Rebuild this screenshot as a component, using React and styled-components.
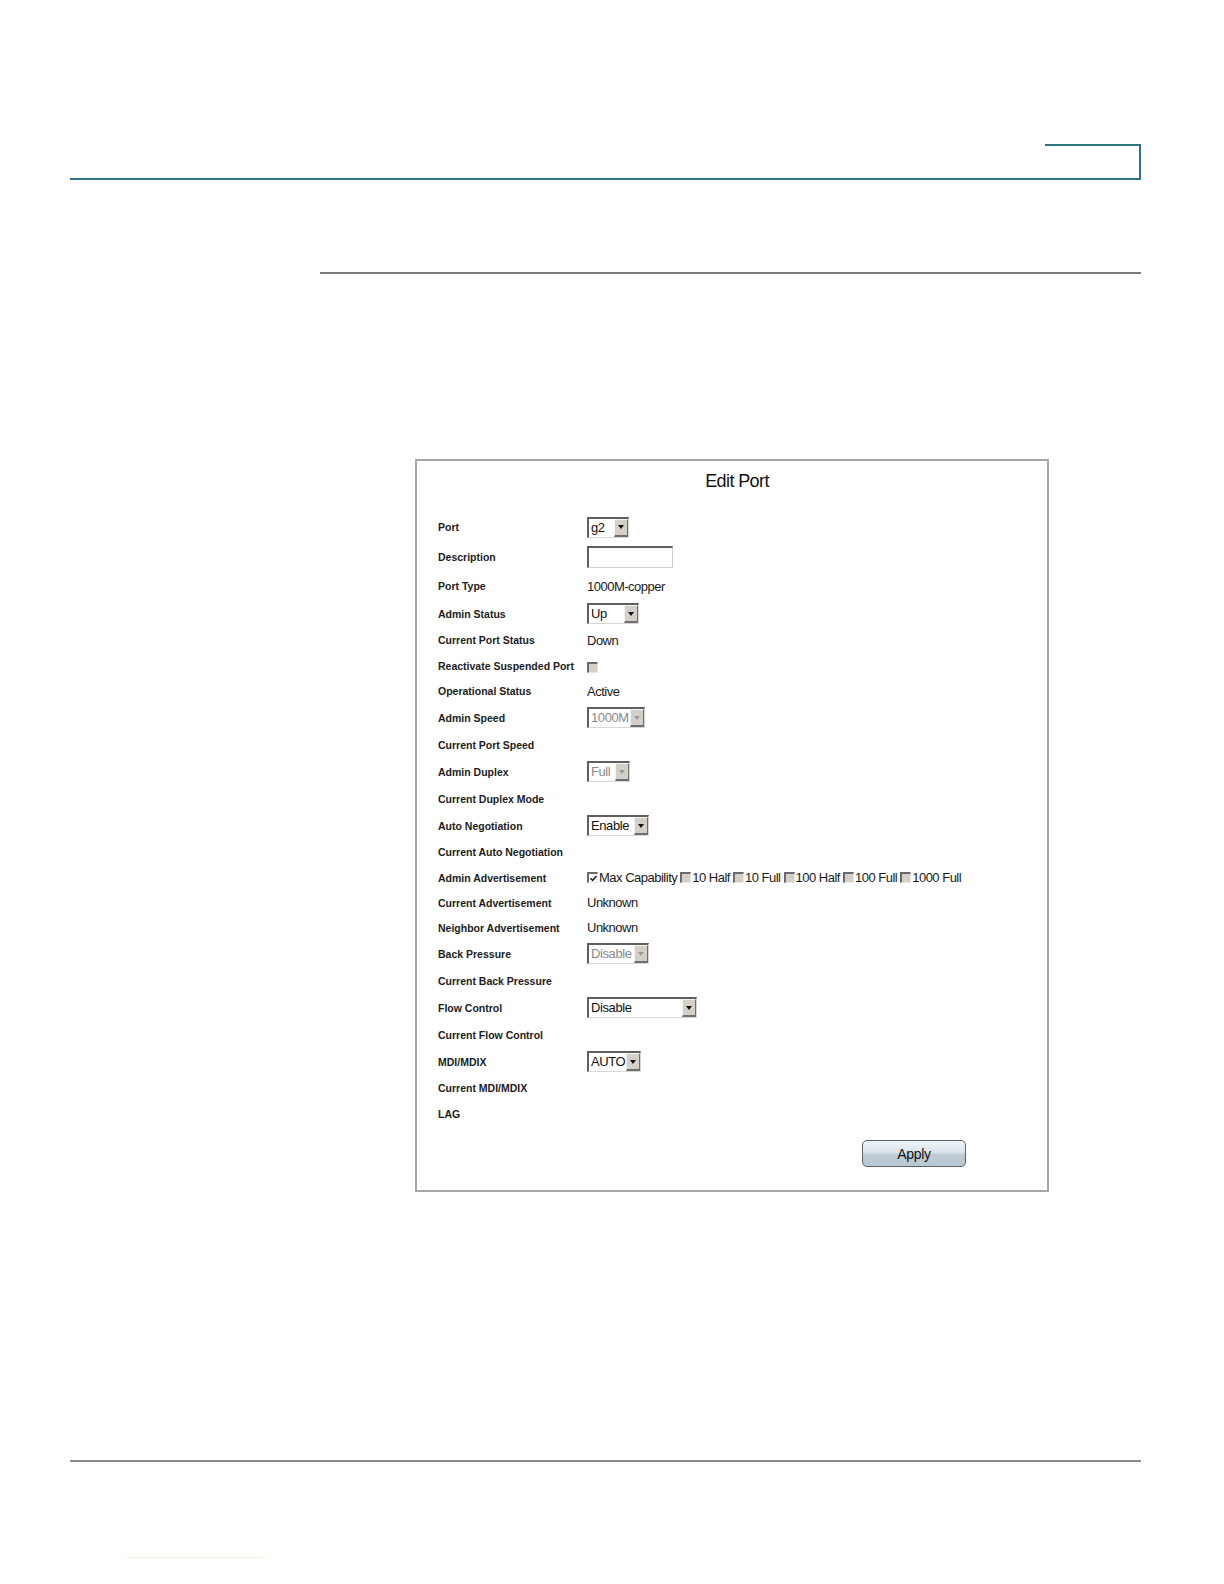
import React from 'react';
import styled, { createGlobalStyle } from 'styled-components';

const GlobalStyle = createGlobalStyle`
  html, body {
    margin: 0;
    padding: 0;
    background: #fff;
  }
  body {
    font-family: "Liberation Sans", Arial, sans-serif;
    color: #111;
  }
`;

const Page = styled.div`
  display: flex;
  flex-direction: column;
`;

const Header = styled.div`
  margin: 144px 83px 0 70px;
  display: flex;
  justify-content: flex-end;
  border-bottom: 2px solid #2f7280;
`;

const HeaderTab = styled.div`
  width: 94px;
  height: 32px;
  border-top: 2px solid #2f7280;
  border-right: 2px solid #2f7280;
`;

const SectionRule = styled.div`
  margin: 92px 83px 0 320px;
  border-top: 2px solid #7a7a7a;
`;

const Panel = styled.div`
  box-sizing: border-box;
  margin: 185px 0 0 415px;
  width: 634px;
  border: 2px solid #a6a6a6;
  padding: 0 0 23px 21px;
  display: flex;
  flex-direction: column;
`;

const Title = styled.div`
  font-size: 18px;
  letter-spacing: -0.6px;
  text-align: center;
  padding: 10px 11px 0 0;
  height: 51px;
  box-sizing: border-box;
  color: #111;
`;

const Row = styled.div`
  display: flex;
  align-items: center;
  height: ${p => p.h}px;
`;

const Label = styled.div`
  width: 149px;
  flex-shrink: 0;
  font-size: 10.5px;
  font-weight: bold;
  color: #1c1c1c;
  white-space: nowrap;
`;

const Value = styled.div`
  font-size: 13px;
  letter-spacing: -0.5px;
  color: #1a1a1a;
  white-space: nowrap;
`;

const SelectBox = styled.div`
  box-sizing: border-box;
  width: ${p => p.w}px;
  height: 21px;
  display: flex;
  align-items: stretch;
  border-top: 2px solid #5f5f5f;
  border-left: 2px solid #5f5f5f;
  border-bottom: 1px solid #d8d8d8;
  border-right: 1px solid #d8d8d8;
  background: #fff;
`;

const SelectText = styled.div`
  flex: 1;
  font-size: 13px;
  letter-spacing: -0.4px;
  line-height: 18px;
  padding-left: 2px;
  color: ${p => (p.disabled ? '#8a8a8a' : '#111')};
  overflow: hidden;
  white-space: nowrap;
`;

const ArrowButton = styled.div`
  width: 14px;
  flex-shrink: 0;
  box-sizing: border-box;
  background: #d4d0c8;
  border-top: 1px solid #f4f4f4;
  border-left: 1px solid #f4f4f4;
  border-bottom: 2px solid #6e6e6e;
  border-right: 1px solid #6e6e6e;
  display: flex;
  align-items: center;
  justify-content: center;
`;

const Triangle = styled.div`
  width: 0;
  height: 0;
  border-left: 3.5px solid transparent;
  border-right: 3.5px solid transparent;
  border-top: 4px solid ${p => (p.disabled ? '#9a9a9a' : '#111')};
`;

const TextInput = styled.div`
  box-sizing: border-box;
  width: 86px;
  height: 22px;
  border-top: 2px solid #5f5f5f;
  border-left: 2px solid #5f5f5f;
  border-bottom: 1px solid #d0d0d0;
  border-right: 1px solid #d0d0d0;
  background: #fff;
`;

const Check = styled.div`
  box-sizing: border-box;
  width: 11px;
  height: 11px;
  flex-shrink: 0;
  border-top: 2px solid #6a6a6a;
  border-left: 2px solid #6a6a6a;
  border-bottom: 1px solid #e8e8e8;
  border-right: 1px solid #e8e8e8;
  background: ${p => (p.checked ? '#fff' : '#d4d0c8')};
  display: flex;
  align-items: center;
  justify-content: center;
  margin-top: ${p => p.offset || 0}px;
`;

const AdGroup = styled.div`
  display: flex;
  align-items: center;
  gap: 3px;
`;

const AdItem = styled.div`
  display: flex;
  align-items: center;
  gap: 1px;
`;

const ApplyRow = styled.div`
  display: flex;
  justify-content: flex-end;
  padding: 14px 81px 0 0;
`;

const ApplyButton = styled.button`
  box-sizing: border-box;
  width: 104px;
  height: 27px;
  border: 1px solid #5b6166;
  border-radius: 5px;
  background: linear-gradient(to bottom, #eef3f6 0%, #dbe4ea 45%, #bccbd6 55%, #b8c8d3 100%);
  font-family: "Liberation Sans", Arial, sans-serif;
  font-size: 14px;
  letter-spacing: -0.3px;
  color: #111;
  padding: 0;
  cursor: pointer;
`;

const FooterRule = styled.div`
  margin: 268px 83px 0 70px;
  border-top: 2px solid #8a8a8a;
`;

const FaintRule = styled.div`
  margin: 95px 0 0 126px;
  width: 140px;
  border-top: 1px solid #f6f2dc;
`;

const Select = ({ w, value, disabled }) => (
  <SelectBox w={w}>
    <SelectText disabled={disabled}>{value}</SelectText>
    <ArrowButton>
      <Triangle disabled={disabled} />
    </ArrowButton>
  </SelectBox>
);

const CheckBox = ({ checked, offset }) => (
  <Check checked={checked} offset={offset}>
    {checked && (
      <svg width="7" height="7" viewBox="0 0 7 7">
        <path d="M0.5 3.2 L2.6 5.4 L6.5 1" stroke="#111" strokeWidth="1.5" fill="none" />
      </svg>
    )}
  </Check>
);

const advertisements = ['10 Half', '10 Full', '100 Half', '100 Full', '1000 Full'];

const rows = [
  { label: 'Port', h: 30, content: <Select w={42} value="g2" /> },
  { label: 'Description', h: 30, content: <TextInput /> },
  { label: 'Port Type', h: 28, content: <Value>1000M-copper</Value> },
  { label: 'Admin Status', h: 27, content: <Select w={52} value="Up" /> },
  { label: 'Current Port Status', h: 26, content: <Value>Down</Value> },
  { label: 'Reactivate Suspended Port', h: 25, content: <CheckBox offset={3} /> },
  { label: 'Operational Status', h: 26, content: <Value>Active</Value> },
  { label: 'Admin Speed', h: 27, content: <Select w={58} value="1000M" disabled /> },
  { label: 'Current Port Speed', h: 27 },
  { label: 'Admin Duplex', h: 27, content: <Select w={43} value="Full" disabled /> },
  { label: 'Current Duplex Mode', h: 27 },
  { label: 'Auto Negotiation', h: 27, content: <Select w={62} value="Enable" /> },
  { label: 'Current Auto Negotiation', h: 26 },
  {
    label: 'Admin Advertisement',
    h: 25,
    content: (
      <AdGroup>
        <AdItem>
          <CheckBox checked />
          <Value>Max Capability</Value>
        </AdItem>
        {advertisements.map(a => (
          <AdItem key={a}>
            <CheckBox />
            <Value>{a}</Value>
          </AdItem>
        ))}
      </AdGroup>
    ),
  },
  { label: 'Current Advertisement', h: 25, content: <Value>Unknown</Value> },
  { label: 'Neighbor Advertisement', h: 25, content: <Value>Unknown</Value> },
  { label: 'Back Pressure', h: 27, content: <Select w={62} value="Disable" disabled /> },
  { label: 'Current Back Pressure', h: 27 },
  { label: 'Flow Control', h: 27, content: <Select w={110} value="Disable" /> },
  { label: 'Current Flow Control', h: 27 },
  { label: 'MDI/MDIX', h: 27, content: <Select w={54} value="AUTO" /> },
  { label: 'Current MDI/MDIX', h: 26 },
  { label: 'LAG', h: 25 },
];

const App = () => (
  <Page>
    <GlobalStyle />
    <Header>
      <HeaderTab />
    </Header>
    <SectionRule />
    <Panel>
      <Title>Edit Port</Title>
      {rows.map(r => (
        <Row key={r.label} h={r.h}>
          <Label>{r.label}</Label>
          {r.content}
        </Row>
      ))}
      <ApplyRow>
        <ApplyButton>Apply</ApplyButton>
      </ApplyRow>
    </Panel>
    <FooterRule />
    <FaintRule />
  </Page>
);

export default App;
